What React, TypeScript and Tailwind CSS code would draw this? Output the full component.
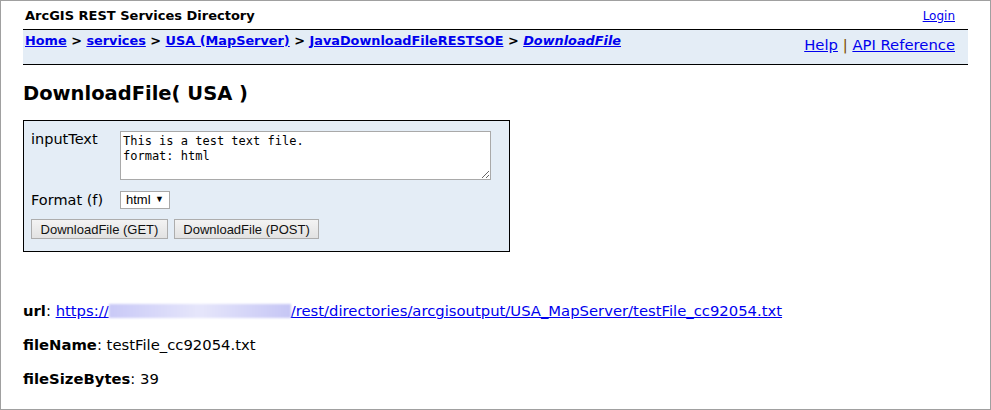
import React from 'react';

const linkCls = 'text-[#0000ee] underline';

function Header() {
  return (
    <div>
      <div className="flex h-[28px] items-end justify-between pb-[7px] pl-[2px] pr-[13px]">
        <span className="text-[13px] font-bold leading-none">ArcGIS REST Services Directory</span>
        <a href="#" className={`${linkCls} text-[12px] leading-none`}>Login</a>
      </div>
      <div className="flex h-[36px] justify-between border-y border-black bg-[#e4edf6] pl-[2px] pr-[13px]">
        <div className="pt-[3px] text-[12.85px] font-bold leading-[16px]">
          <a href="#" className={linkCls}>Home</a> &gt; <a href="#" className={linkCls}>services</a> &gt;{' '}
          <a href="#" className={linkCls}>USA (MapServer)</a> &gt;{' '}
          <a href="#" className={linkCls}>JavaDownloadFileRESTSOE</a> &gt;{' '}
          <a href="#" className={`${linkCls} italic`}>DownloadFile</a>
        </div>
        <div className="pt-[6px] text-[14.8px] leading-[17px]">
          <a href="#" className={linkCls}>Help</a> <span className="text-[#7a4a00]">|</span>{' '}
          <a href="#" className={linkCls}>API Reference</a>
        </div>
      </div>
    </div>
  );
}

function OperationForm() {
  return (
    <div className="w-[487px] border border-black bg-[#e4edf6] px-[7px] pt-[10px] pb-[12px]">
      <div className="grid grid-cols-[89px_1fr] items-start">
        <label className="text-[14.5px] leading-[17px]">inputText</label>
        <textarea
          className="h-[49px] w-[371px] resize-y border border-[#a9a9a9] bg-white px-[2px] pt-[2px] font-['DejaVu_Sans_Mono',monospace] text-[12px] leading-[15px] outline-none"
          defaultValue={'This is a test text file.\nformat: html'}
        />
      </div>
      <div className="mt-[11px] grid grid-cols-[89px_1fr] items-center">
        <label className="text-[14.5px] leading-[17px]">Format (f)</label>
        <div className="flex h-[18px] w-[50px] items-center justify-between border border-[#a9a9a9] bg-white pl-[5px] pr-[5px] font-['Liberation_Sans',sans-serif] text-[13px]">
          <span>html</span>
          <span className="text-[9px]">▼</span>
        </div>
      </div>
      <div className="mt-[10px] flex gap-[6px] font-['Liberation_Sans',sans-serif] text-[13px]">
        <button className="h-[20px] w-[137px] border border-[#adadad] bg-gradient-to-b from-[#f3f3f3] to-[#e2e2e2] text-[#111]">
          DownloadFile (GET)
        </button>
        <button className="h-[20px] w-[145px] border border-[#adadad] bg-gradient-to-b from-[#f3f3f3] to-[#e2e2e2] text-[#111]">
          DownloadFile (POST)
        </button>
      </div>
    </div>
  );
}

export default function App() {
  return (
    <div className="h-[410px] w-[991px] overflow-hidden border border-[#a0a0a0] bg-white px-[22px] font-['DejaVu_Sans',Verdana,sans-serif] text-black">
      <Header />
      <h2 className="mt-[17px] mb-[14px] text-[19.5px] font-bold leading-[24px]">DownloadFile( USA )</h2>
      <OperationForm />
      <div className="mt-[50px] space-y-[17px] text-[14.8px] leading-[17px]">
        <div>
          <b>url</b>:{' '}
          <a href="#" className={linkCls}>
            https://
            <span className="inline-block h-[14px] w-[182px] translate-y-[2px] bg-gradient-to-r from-[#c9c9f7] via-[#e6e6fb] to-[#c6c6f5] blur-[1px]" />
            /rest/directories/arcgisoutput/USA_MapServer/testFile_cc92054.txt
          </a>
        </div>
        <div>
          <b>fileName</b>: testFile_cc92054.txt
        </div>
        <div>
          <b>fileSizeBytes</b>: 39
        </div>
      </div>
    </div>
  );
}
